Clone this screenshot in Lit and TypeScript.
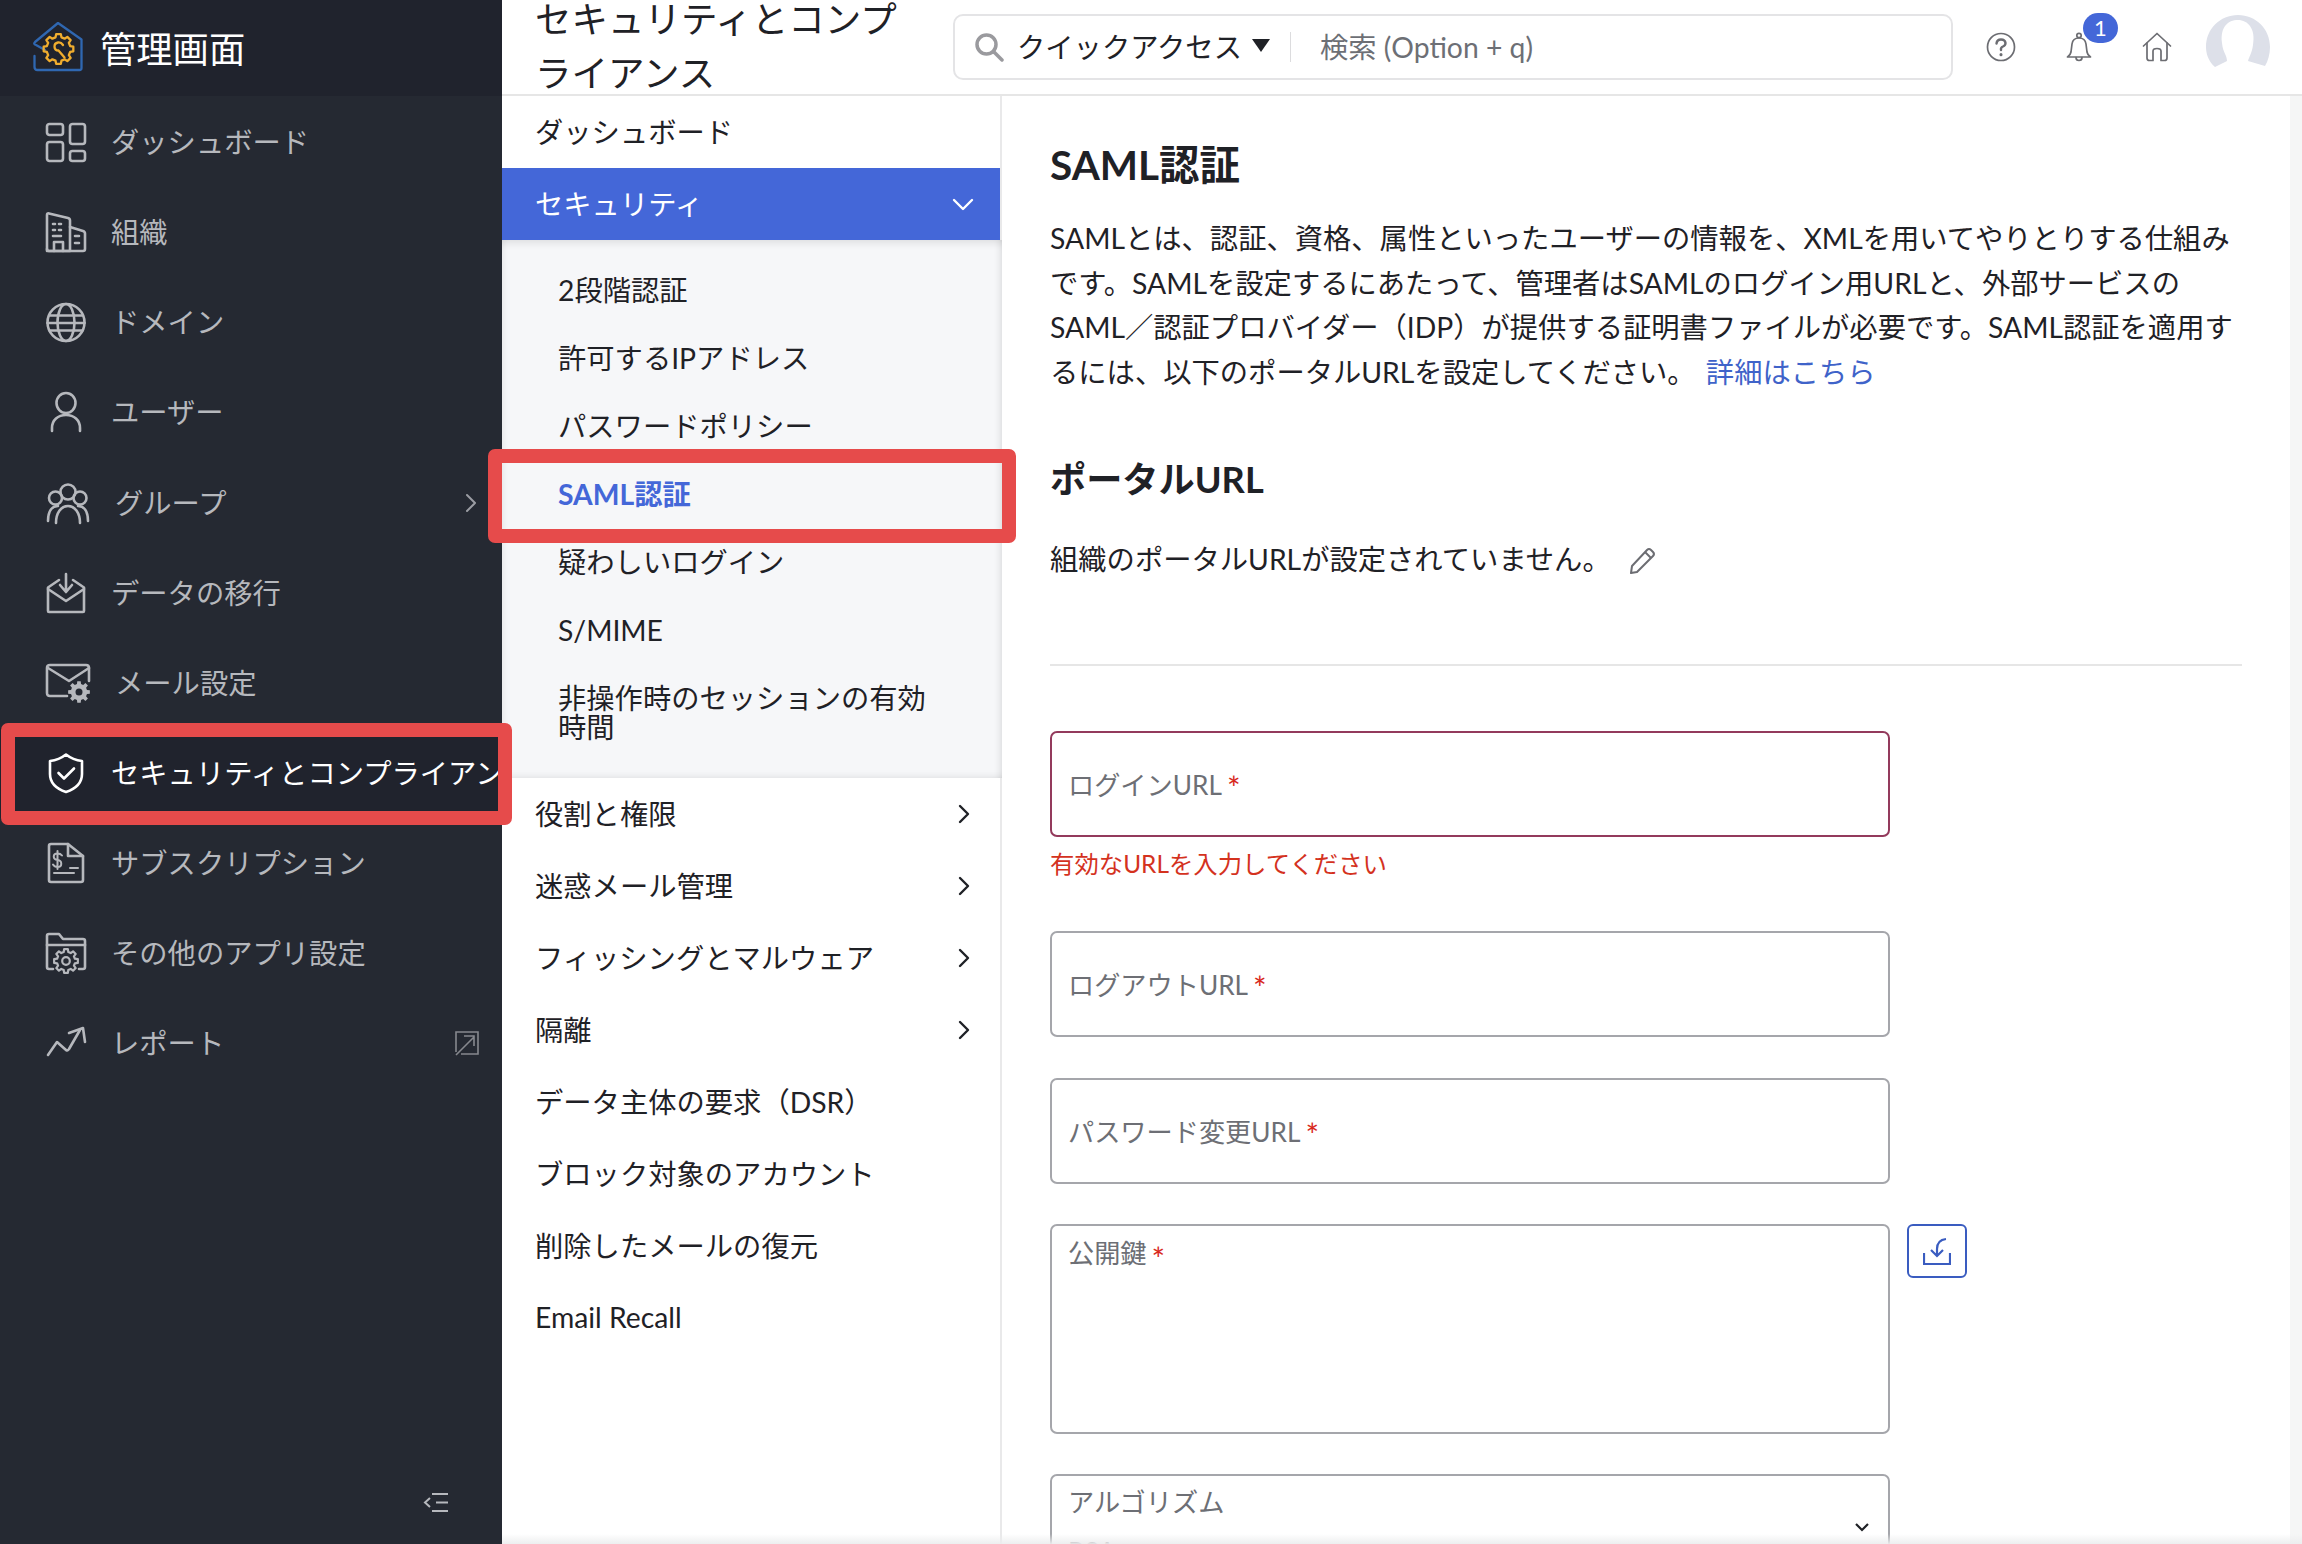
import { LitElement, html, css, svg } from 'lit';
import { customElement } from 'lit/decorators.js';

// outline of a cog with n teeth, used in the logo and the settings icons
const gearPath = (cx: number, cy: number, outer: number, inner: number, n = 8) => {
  const pts: string[] = [];
  const step = (Math.PI * 2) / n;
  for (let i = 0; i < n; i++) {
    const a = i * step;
    const pt = (r: number, da: number) =>
      `${(cx + r * Math.cos(a + da)).toFixed(2)} ${(cy + r * Math.sin(a + da)).toFixed(2)}`;
    pts.push(pt(inner, -step * 0.32), pt(outer, -step * 0.2), pt(outer, step * 0.2), pt(inner, step * 0.32));
  }
  return `M${pts.join('L')}Z`;
};

const icons: Record<string, unknown> = {
  dashboard: svg`<rect x="1" y="2" width="16" height="11" rx="2.5"/><rect x="24" y="2" width="15" height="20" rx="2.5"/>
    <rect x="1" y="20" width="16" height="19" rx="2.5"/><rect x="24" y="29" width="15" height="10" rx="2.5"/>`,
  org: svg`<path d="M1 39V3q0-2 2-1.600L22 6q2 .5 2 2.500V39z"/><path d="M24 15l13 4q2 .6 2 2.600V37q0 2-2 2H3q-2 0-2-2"/>
    <path d="M7 12h2m4 0h2M7 18h2m4 0h2M7 24h8"/><path d="M8 39V30h9v9"/><path d="M29 24h4m-4 7h4"/>`,
  globe: svg`<circle cx="20" cy="20.500" r="18.500"/><ellipse cx="20" cy="20.500" rx="8.500" ry="18.500"/>
    <path d="M3.500 13.500h33M1.500 21h37M3.500 28.500h33"/>`,
  user: svg`<ellipse cx="20" cy="11" rx="9.500" ry="10"/><path d="M6 39v-3c0-8 6-13 14-13s14 5 14 13v3"/>`,
  group: svg`<circle cx="22" cy="9" r="7.500"/><circle cx="9.500" cy="15" r="6.500"/><circle cx="34" cy="15" r="6.500"/>
    <path d="M2 38c0-10 4-15 10-15m20 0c6 0 10 5 10 15"/><path d="M10 40c0-10 5-17 12-17s12 7 12 17"/>`,
  migrate: svg`<path d="M20 1v17M14 12l6 7 6-7" /><path d="M13 7L2 14.500V38q0 1 1 1h34q1 0 1-1V14.500L27 7"/><path d="M2 16l18 12 18-12"/>`,
  mail: svg`<path d="M21 33H4q-3 0-3-3V5q0-3 3-3h36q3 0 3 3v13"/><path d="M2 5l21 13L43 5"/>
    <path d=${gearPath(33, 29, 11, 8.2)} fill="currentColor" stroke="none"/>
    <circle cx="33" cy="29" r="3.500" fill="#252932" stroke="none"/>`,
  shield: svg`<path d="M20 1.500q7 5.500 16 6.500v13c0 9-7 15-16 18-9-3-16-9-16-18V8q9-1 16-6.500z"/><path d="M12.500 20l5.500 5.500 10-10"/>`,
  sub: svg`<path d="M5 39q-2 0-2-2V3q0-2 2-2h17l15 12v24q0 2-2 2z"/><path d="M22 1v12h15"/>
    <path d="M16 12.500q-1.500-2-4.500-2c-5 0-5 6 0 6.500s5 7 0 7q-3 0-4.500-2.500M11.500 8v18M8 30h20M24 25h8" stroke-width="2"/>`,
  folder: svg`<path d="M7 36H3q-2 0-2-2V3q0-2 2-2h10l4 5h20q2 0 2 2v26q0 2-2 2h-4"/><path d="M1 12h38"/>
    <path d=${gearPath(20, 28, 12, 9.2)} stroke-width="2.200"/><circle cx="20" cy="28" r="3.800" stroke-width="2.200"/>`,
  report: svg`<path d="M2 32l9-13 9 8q2 1 3-1L34 7"/><path d="M23 10l14-5 2 14"/>`,
};

const chevronRight = html`<svg class="chev" viewBox="0 0 12 20"><path d="M2 2l8 8-8 8"/></svg>`;

const sideItems = [
  { icon: 'dashboard', label: 'ダッシュボード' },
  { icon: 'org', label: '組織' },
  { icon: 'globe', label: 'ドメイン' },
  { icon: 'user', label: 'ユーザー' },
  { icon: 'group', label: 'グループ', shift: 'far', more: true },
  { icon: 'migrate', label: 'データの移行' },
  { icon: 'mail', label: 'メール設定', wide: true },
  { icon: 'shield', label: 'セキュリティとコンプライアンス', active: true },
  { icon: 'sub', label: 'サブスクリプション' },
  { icon: 'folder', label: 'その他のアプリ設定' },
  { icon: 'report', label: 'レポート', shift: 'near', ext: true },
];

const subItems = ['2段階認証', '許可するIPアドレス', 'パスワードポリシー', 'SAML認証', '疑わしいログイン', 'S/MIME', '非操作時のセッションの有効時間'];
const lowerItems = [
  { label: '役割と権限', more: true },
  { label: '迷惑メール管理', more: true },
  { label: 'フィッシングとマルウェア', more: true },
  { label: '隔離', more: true },
  { label: 'データ主体の要求（DSR）' },
  { label: 'ブロック対象のアカウント' },
  { label: '削除したメールの復元' },
  { label: 'Email Recall' },
];

@customElement('app-root')
export class AppRoot extends LitElement {
  static override styles = css`
    :host {
      display: flex;
      position: relative;
      width: 2302px;
      height: 1544px;
      overflow: hidden;
      background: #fff;
      font-family: Lato, "Noto Sans CJK JP", sans-serif;
      font-size: 28.3px;
      color: #1f2126;
    }
    .sidebar {
      width: 502px;
      flex: none;
      display: flex;
      flex-direction: column;
      background: #252932;
      color: #b6b8bd;
      overflow: hidden;
      position: relative;
    }
    .brand {
      height: 96px;
      flex: none;
      box-sizing: border-box;
      display: flex;
      align-items: center;
      gap: 17px;
      padding: 0 0 2px 33px;
      background: #20232d;
      color: #fff;
      font-size: 36.3px;
    }
    .brand svg { width: 50px; height: 50px; }
    .side-list { padding-top: 1px; }
    .side-item {
      height: 90.15px;
      display: flex;
      align-items: center;
      padding-left: 46px;
      white-space: nowrap;
    }
    .side-item.active { background: #20232d; color: #fff; }
    .side-item .ico {
      width: 40px;
      height: 40px;
      flex: none;
      fill: none;
      stroke: currentColor;
      stroke-width: 2.600;
      stroke-linejoin: round;
      stroke-linecap: round;
      overflow: visible;
    }
    .side-item .ico.wide { width: 44px; }
    .side-item .label { margin: 0 0 3px 25px; }
    .side-item .label.far { margin-left: 29px; }
    .side-item .label.near { margin-left: 25px; }
    .side-item .tail { margin-left: auto; margin-right: 25px; color: #9b9da3; display: flex; }
    .side-item .tail .chev { width: 12px; height: 20px; fill: none; stroke: #9b9da3; stroke-width: 2; stroke-linecap: round; stroke-linejoin: round; }
    .side-item .tail .ext {
      width: 26px;
      height: 26px;
      margin-right: -3px;
      display: block;
      fill: none;
      stroke: #86888e;
      stroke-width: 1.600;
    }
    .collapse {
      position: absolute;
      left: 423px;
      top: 1493px;
      width: 26px;
      height: 19px;
      fill: none;
      stroke: #b6b8bd;
      stroke-width: 2;
    }
    .right { flex: 1; min-width: 0; display: flex; flex-direction: column; }
    .top {
      height: 96px;
      flex: none;
      box-sizing: border-box;
      border-bottom: 2px solid #e6e6e6;
      display: flex;
      align-items: center;
      padding-left: 33px;
    }
    .page-title {
      width: 380px;
      margin: -2px 38px 0 0;
      flex: none;
      font-size: 36.5px;
      line-height: 54px;
    }
    .search {
      width: 1000px;
      height: 66px;
      flex: none;
      box-sizing: border-box;
      border: 2px solid #e4e4e6;
      border-radius: 10px;
      display: flex;
      align-items: center;
      padding-left: 19px;
    }
    .search .lens { width: 30px; height: 30px; fill: none; stroke: #9a9a9e; stroke-width: 3.500; stroke-linecap: round; }
    .search .quick { margin: 0 0 3px 13px; display: flex; align-items: center; gap: 10px; }
    .search .tri { width: 0; height: 0; border: 9px solid transparent; border-top: 13px solid #1f2126; border-bottom: 0; }
    .search .sep { width: 1px; height: 30px; background: #dcdcde; margin: 0 29px 0 20px; }
    .search .ph { color: #6d6f75; margin-bottom: 3px; }
    .tools { position: relative; flex: 1; height: 100%; }
    .tool {
      position: absolute;
      fill: none;
      stroke: #6c6d72;
      stroke-width: 1.700;
      stroke-linecap: round;
      stroke-linejoin: round;
    }
    .help { left: 33px; top: 32px; width: 30px; height: 30px; }
    .bell { left: 113px; top: 32px; width: 26px; height: 30px; }
    .home { left: 189px; top: 32px; width: 30px; height: 30px; }
    .avatar { left: 253px; top: 15px; width: 64px; height: 53px; }
    .badge {
      position: absolute;
      left: 130px;
      top: 13px;
      width: 35px;
      height: 30px;
      border-radius: 15px;
      background: #4467d8;
      color: #fff;
      font-size: 22px;
      line-height: 30px;
      text-align: center;
    }
    .body { flex: 1; min-height: 0; display: flex; position: relative; }
    .subnav {
      width: 500px;
      box-sizing: border-box;
      flex: none;
      border-right: 2px solid #e9e9ea;
    }
    .row {
      height: 72px;
      box-sizing: border-box;
      display: flex;
      align-items: center;
      justify-content: space-between;
      padding: 0 30px 0 33px;
    }
    .row span { margin-bottom: 3px; }
    .row .chev { width: 12px; height: 20px; fill: none; stroke: #1f2126; stroke-width: 2.400; stroke-linecap: round; stroke-linejoin: round; }
    .row.open { background: #4467d8; color: #fff; padding-right: 26px; }
    .row.open svg { width: 22px; height: 13px; fill: none; stroke: #fff; stroke-width: 2.400; stroke-linecap: round; stroke-linejoin: round; }
    .panel {
      box-sizing: border-box;
      height: 538px;
      margin-right: -2px;
      padding: 16px 60px 0 56px;
      background: #f6f7f9;
      box-shadow: inset 0 10px 10px -8px rgba(0, 0, 0, 0.12), inset -8px 0 8px -8px rgba(0, 0, 0, 0.16),
        inset 8px 0 8px -8px rgba(0, 0, 0, 0.1), inset 0 -8px 8px -8px rgba(0, 0, 0, 0.12);
    }
    .panel div { padding: 19.500px 0; line-height: 29px; }
    .panel .current { color: #4467d8; font-weight: 700; }
    .main {
      flex: 1;
      min-width: 0;
      box-sizing: border-box;
      padding: 0 48px;
      overflow: hidden;
    }
    h2 { margin: 0; line-height: 50px; font-weight: 700; }
    .h-saml { margin-top: 44px; font-size: 40.5px; }
    .desc { margin: 26px 0 0; width: 1192px; line-height: 44.500px; }
    .desc a { color: #3f63c9; margin-left: 3px; }
    .h-portal { margin-top: 60px; font-size: 36.2px; }
    .status { display: flex; align-items: center; margin-top: 33px; line-height: 44px; }
    .status svg { width: 30px; height: 30px; margin: 4px 0 0 16px; fill: none; stroke: #6c6d72; stroke-width: 2; stroke-linejoin: round; }
    .divider { height: 2px; background: #e6e6e6; margin-top: 83px; width: 1192px; }
    .box {
      width: 840px;
      box-sizing: border-box;
      border: 2px solid #a5a6ab;
      border-radius: 7px;
      padding-left: 16px;
      color: #6d6f75;
      font-size: 26.2px;
      display: flex;
      align-items: center;
    }
    .box i { color: #d8281c; font-style: normal; font-size: 32px; line-height: 1; margin: 7px 0 0 5px; }
    .box.single { height: 106px; }
    .box.bad { border-color: #933a5c; margin-top: 65px; }
    .err { color: #d4321e; font-size: 24.4px; line-height: 34px; margin-top: 10px; }
    .m1 { margin-top: 50px; }
    .m2 { margin-top: 41px; }
    .key-row { display: flex; align-items: flex-start; gap: 17px; margin-top: 40px; }
    .box.key { height: 210px; align-items: flex-start; padding-top: 9px; line-height: 36px; }
    .box.key i { margin-top: 8px; }
    .upload {
      width: 60px;
      height: 54px;
      box-sizing: border-box;
      border: 2px solid #3a5cc0;
      border-radius: 6px;
      display: flex;
      align-items: center;
      justify-content: center;
    }
    .upload svg { width: 28px; height: 28px; fill: none; stroke: #3a5cc0; stroke-width: 2.200; }
    .box.algo {
      position: relative;
      height: 120px;
      margin-top: 40px;
      display: block;
      padding-top: 8px;
      line-height: 36px;
    }
    .box.algo .val { margin-top: 14px; }
    .box.algo svg {
      position: absolute;
      right: 19px;
      top: 47px;
      width: 14px;
      height: 9px;
      fill: none;
      stroke: #1f2126;
      stroke-width: 2.200;
    }
    .track { width: 12px; flex: none; background: #f5f6f6; }
    .fade {
      position: absolute;
      left: 502px;
      right: 0;
      bottom: 0;
      height: 10px;
      background: linear-gradient(rgba(236, 237, 238, 0), rgba(236, 237, 238, 0.95));
      pointer-events: none;
    }
    .mark {
      position: absolute;
      box-sizing: border-box;
      border: 14px solid #e64b4b;
      border-radius: 7px;
    }
    .mark.side { left: 1px; top: 723px; width: 511px; height: 102px; }
    .mark.saml { left: 488px; top: 449px; width: 528px; height: 94px; }
  `;

  override render() {
    return html`
      <aside class="sidebar">
        <div class="brand">
          <svg viewBox="0 0 50 50" fill="none" stroke-linejoin="round" stroke-linecap="round">
            <path d="M1.500 34v11q0 3 3 3h42q2 0 2-2V17.500L25 1 2 20q-2 2 1 3l9 5" stroke="#2f67b1" stroke-width="2.300"/>
            <path d=${gearPath(25.500, 27, 15, 12)} stroke="#f0ad2e" stroke-width="2.300"/>
            <path d="M30 23q-2-3-5-2.500c-5 1-4.500 8 .5 8l6 7" stroke="#f0ad2e" stroke-width="2.300"/>
          </svg>
          <span>管理画面</span>
        </div>
        <div class="side-list">
          ${sideItems.map(
            (item) => html`
              <div class="side-item ${item.active ? 'active' : ''}">
                <svg class="ico ${item.wide ? 'wide' : ''}" viewBox="0 0 ${item.wide ? 44 : 40} 40">${icons[item.icon]}</svg>
                <span class="label ${item.shift ?? ''}">${item.label}</span>
                ${item.more ? html`<span class="tail">${chevronRight}</span>` : ''}
                ${item.ext
                  ? html`<span class="tail"><svg class="ext" viewBox="0 0 26 26"><path d="M2 22V2h22v22H7"/><path d="M2 25L20 7M10 6h10v10"/></svg></span>`
                  : ''}
              </div>
            `
          )}
        </div>
        <svg class="collapse" viewBox="0 0 26 19"><path d="M7 5L2 9.500 7 14M9 1h16M13 9.500h12M9 18h16"/></svg>
      </aside>

      <div class="right">
        <header class="top">
          <div class="page-title">セキュリティとコンプライアンス</div>
          <div class="search">
            <svg class="lens" viewBox="0 0 30 30"><circle cx="12.500" cy="12.500" r="9.500"/><path d="M20 20l8 8"/></svg>
            <div class="quick"><span>クイックアクセス</span><span class="tri"></span></div>
            <span class="sep"></span>
            <span class="ph">検索 (Option + q)</span>
          </div>
          <div class="tools">
            <svg class="tool help" viewBox="0 0 30 30">
              <circle cx="15" cy="15" r="13.500"/>
              <path d="M10.500 11.500q.5-4 4.500-4t4.500 3.500q0 2.500-2.500 3.500t-2 3.500" stroke-width="2.400"/>
              <path d="M15 22.500v.2" stroke-width="3"/>
            </svg>
            <svg class="tool bell" viewBox="0 0 26 30">
              <path d="M1.500 25q3-2 3.500-5l1-8q.8-6 7-6t7 6l1 8q.5 3 3.500 5z"/>
              <circle cx="13" cy="3.500" r="2.200"/><path d="M10 25.500q0 3 3 3t3-3"/>
            </svg>
            <span class="badge">1</span>
            <svg class="tool home" viewBox="0 0 30 30">
              <path d="M1.500 14L15 1.500 28.500 14"/><path d="M5 11v15q0 2.500 2.500 2.500H11V19q0-2.500 4-2.500t4 2.500v9.500h3.500q2.500 0 2.500-2.500V11"/>
            </svg>
            <svg class="tool avatar" viewBox="0 0 64 53" style="stroke:none">
              <path d="M9 52C2 46 0 38 0 32 0 14 14 0 32 0s32 14 32 32c0 7-2 14-5 19l-17-5c1-4 4-8 5-16 3-16-5-25-15-25S14 12 16 28c1 10 5 12 5 18z" fill="#dde0e9"/>
            </svg>
          </div>
        </header>

        <div class="body">
          <nav class="subnav">
            <div class="row"><span>ダッシュボード</span></div>
            <div class="row open">
              <span>セキュリティ</span>
              <svg viewBox="0 0 22 13"><path d="M2 2l9 9 9-9"/></svg>
            </div>
            <div class="panel">
              ${subItems.map((label) => html`<div class=${label === 'SAML認証' ? 'current' : ''}>${label}</div>`)}
            </div>
            ${lowerItems.map((item) => html`<div class="row"><span>${item.label}</span>${item.more ? chevronRight : ''}</div>`)}
          </nav>

          <main class="main">
            <h2 class="h-saml">SAML認証</h2>
            <p class="desc">
              SAMLとは、認証、資格、属性といったユーザーの情報を、XMLを用いてやりとりする仕組みです。SAMLを設定するにあたって、管理者はSAMLのログイン用URLと、外部サービスのSAML／認証プロバイダー（IDP）が提供する証明書ファイルが必要です。SAML認証を適用するには、以下のポータルURLを設定してください。
              <a>詳細はこちら</a>
            </p>
            <h2 class="h-portal">ポータルURL</h2>
            <div class="status">
              <span>組織のポータルURLが設定されていません。</span>
              <svg viewBox="0 0 30 30"><path d="M4 27l1-7L20 4q2-2 4 0l2 2q2 2 0 4L10 26z"/><path d="M18 6l6 6"/></svg>
            </div>
            <div class="divider"></div>

            <div class="box single bad">ログインURL<i>*</i></div>
            <div class="err">有効なURLを入力してください</div>
            <div class="box single m1">ログアウトURL<i>*</i></div>
            <div class="box single m2">パスワード変更URL<i>*</i></div>
            <div class="key-row">
              <div class="box key">公開鍵<i>*</i></div>
              <div class="upload">
                <svg viewBox="0 0 28 28"><path d="M1 16v11h26V16"/><path d="M23 2q-9 1-9 10v7M8 13l6 6 6-6"/></svg>
              </div>
            </div>
            <div class="box algo">
              <div>アルゴリズム</div>
              <div class="val">RSA</div>
              <svg viewBox="0 0 14 9"><path d="M1 1l6 6 6-6"/></svg>
            </div>
          </main>
          <div class="track"></div>
        </div>
      </div>

      <div class="fade"></div>
      <div class="mark side"></div>
      <div class="mark saml"></div>
    `;
  }
}
